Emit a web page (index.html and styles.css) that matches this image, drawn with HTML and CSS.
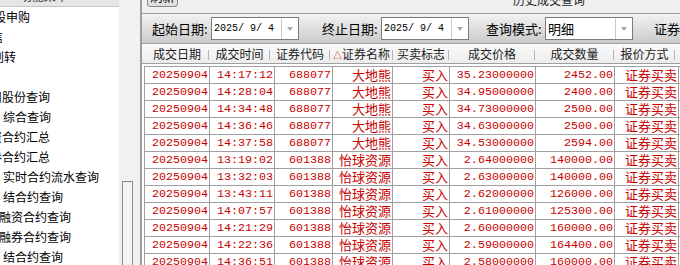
FILE: index.html
```html
<!DOCTYPE html>
<html lang="zh-CN">
<head>
  <meta charset="UTF-8">
  <title>历史成交查询</title>
  <link rel="stylesheet" href="styles.css">
</head>
<body>
  <div class="tree">
    <div class="tree-head"><span>功能菜单</span></div>
    <div class="tree-item" style="text-indent: -18px">新股申购</div>
    <div class="tree-item" style="text-indent: -9px">信</div>
    <div class="tree-item" style="text-indent: -8px">划转</div>
    <div class="tree-item"></div>
    <div class="tree-item" style="text-indent: -10px">用股份查询</div>
    <div class="tree-item" style="text-indent: 3px">综合查询</div>
    <div class="tree-item" style="text-indent: -10px">资合约汇总</div>
    <div class="tree-item" style="text-indent: -10px">券合约汇总</div>
    <div class="tree-item" style="text-indent: 3px">实时合约流水查询</div>
    <div class="tree-item" style="text-indent: 3px">结合约查询</div>
    <div class="tree-item" style="text-indent: -1px">融资合约查询</div>
    <div class="tree-item" style="text-indent: -1px">融券合约查询</div>
    <div class="tree-item" style="text-indent: 3px">结合约查询</div>
  </div>

  <div class="scroll">
    <div class="scroll-thumb"></div>
  </div>

  <div class="main">
    <div class="topbar">
      <button class="btn">刷新</button>
      <div class="title">历史成交查询</div>
    </div>

    <div class="toolbar">
      <span class="label">起始日期:</span>
      <div class="field"><span class="field-text mono">2025/ 9/ 4</span><span class="field-arrow"></span></div>
      <span class="label gap-a">终止日期:</span>
      <div class="field"><span class="field-text mono">2025/ 9/ 4</span><span class="field-arrow"></span></div>
      <span class="label gap-b">查询模式:</span>
      <div class="field"><span class="field-text">明细</span><span class="field-arrow"></span></div>
      <span class="label gap-c">证券代码:</span>
    </div>

    <div class="head">
      <span>成交日期</span>
      <span>成交时间</span>
      <span>证券代码</span>
      <span><i class="sort">△</i>证券名称</span>
      <span>买卖标志</span>
      <span>成交价格</span>
      <span>成交数量</span>
      <span>报价方式</span>
      <span class="blank"></span>
    </div>

    <div class="grid">
      <div class="row"><span>20250904</span><span>14:17:12</span><span>688077</span><span class="cn">大地熊</span><span class="cn">买入</span><span>35.23000000</span><span>2452.00</span><span class="cn">证券买卖</span><span></span></div>
      <div class="row"><span>20250904</span><span>14:28:04</span><span>688077</span><span class="cn">大地熊</span><span class="cn">买入</span><span>34.95000000</span><span>2400.00</span><span class="cn">证券买卖</span><span></span></div>
      <div class="row"><span>20250904</span><span>14:34:48</span><span>688077</span><span class="cn">大地熊</span><span class="cn">买入</span><span>34.73000000</span><span>2500.00</span><span class="cn">证券买卖</span><span></span></div>
      <div class="row"><span>20250904</span><span>14:36:46</span><span>688077</span><span class="cn">大地熊</span><span class="cn">买入</span><span>34.63000000</span><span>2500.00</span><span class="cn">证券买卖</span><span></span></div>
      <div class="row"><span>20250904</span><span>14:37:58</span><span>688077</span><span class="cn">大地熊</span><span class="cn">买入</span><span>34.53000000</span><span>2594.00</span><span class="cn">证券买卖</span><span></span></div>
      <div class="row"><span>20250904</span><span>13:19:02</span><span>601388</span><span class="cn">怡球资源</span><span class="cn">买入</span><span>2.64000000</span><span>140000.00</span><span class="cn">证券买卖</span><span></span></div>
      <div class="row"><span>20250904</span><span>13:32:03</span><span>601388</span><span class="cn">怡球资源</span><span class="cn">买入</span><span>2.63000000</span><span>140000.00</span><span class="cn">证券买卖</span><span></span></div>
      <div class="row"><span>20250904</span><span>13:43:11</span><span>601388</span><span class="cn">怡球资源</span><span class="cn">买入</span><span>2.62000000</span><span>126000.00</span><span class="cn">证券买卖</span><span></span></div>
      <div class="row"><span>20250904</span><span>14:07:57</span><span>601388</span><span class="cn">怡球资源</span><span class="cn">买入</span><span>2.61000000</span><span>125300.00</span><span class="cn">证券买卖</span><span></span></div>
      <div class="row"><span>20250904</span><span>14:21:29</span><span>601388</span><span class="cn">怡球资源</span><span class="cn">买入</span><span>2.60000000</span><span>160000.00</span><span class="cn">证券买卖</span><span></span></div>
      <div class="row"><span>20250904</span><span>14:22:36</span><span>601388</span><span class="cn">怡球资源</span><span class="cn">买入</span><span>2.59000000</span><span>164400.00</span><span class="cn">证券买卖</span><span></span></div>
      <div class="row"><span>20250904</span><span>14:36:51</span><span>601388</span><span class="cn">怡球资源</span><span class="cn">买入</span><span>2.58000000</span><span>160000.00</span><span class="cn">证券买卖</span><span></span></div>
    </div>
  </div>
</body>
</html>
```

FILE: styles.css
```css
* {
  box-sizing: border-box;
}

body {
  margin: 0;
  width: 680px;
  height: 265px;
  overflow: hidden;
  display: flex;
  font-family: "Noto Sans CJK SC", sans-serif;
  font-size: 12px;
  color: #000;
  background: #f0f0f0;
}

.mono {
  font-family: "Liberation Mono", monospace;
}

/* left menu tree */
.tree {
  width: 119px;
  flex: none;
  background: #fff;
  overflow: hidden;
}

.tree-head {
  height: 7px;
  background: #e6e6e6;
  border-bottom: 1px solid #c4c4c4;
  overflow: hidden;
}

.tree-head span {
  display: block;
  margin: -10px 0 0 20px;
  line-height: 12px;
  color: #333;
}

.tree-item {
  height: 20px;
  line-height: 20px;
  white-space: nowrap;
}

.scroll {
  width: 21px;
  flex: none;
  background: #f1f1f1;
  padding: 181px 0 0 3px;
}

.scroll-thumb {
  width: 11px;
  height: 100px;
  border: 1px solid #8c8c8c;
  background: #f3f3f3;
}

/* right query panel */
.main {
  width: 816px;
  flex: none;
  border-left: 2px solid #9c9c9c;
  background: #fff;
}

.topbar {
  height: 14px;
  background: #f0f0f0;
  border-bottom: 1px solid #a0a0a0;
  display: flex;
  align-items: flex-start;
}

.btn {
  width: 31px;
  height: 20px;
  margin: -13px 0 0 5px;
  padding: 0;
  border: 1px solid #8a8a8a;
  border-radius: 3px;
  background: linear-gradient(#f6f6f6, #dcdcdc);
  font-family: inherit;
  font-size: 12px;
  line-height: 18px;
  color: #000;
}

.title {
  margin: -6px 0 0 335px;
  line-height: 12px;
  color: #222;
}

.toolbar {
  height: 30px;
  background: linear-gradient(#f2f2f2, #cbcbcb);
  border-bottom: 1px solid #a0a0a0;
  display: flex;
  align-items: center;
  padding-left: 10px;
  font-size: 13px;
  white-space: nowrap;
}

.label {
  width: 55px;
  flex: none;
}

.gap-a { margin-left: 23px; }
.gap-b { margin-left: 17px; }
.gap-c { margin-left: 21px; }

.field {
  width: 88px;
  height: 23px;
  flex: none;
  margin-left: 4px;
  display: flex;
  background: #fff;
  border: 1px solid #7b7b7b;
}

.field-text {
  flex: 1;
  padding-left: 2px;
  line-height: 21px;
}

.field-text.mono {
  font-size: 10px;
  white-space: pre;
}

.field-arrow {
  width: 17px;
  border-left: 1px solid #c8c8c8;
  display: flex;
  align-items: center;
  justify-content: center;
}

.field-arrow::before {
  content: "";
  border-left: 3.5px solid transparent;
  border-right: 3.5px solid transparent;
  border-top: 4px solid #a8a8a8;
}

/* table header */
.head {
  height: 20px;
  padding-left: 3px;
  display: grid;
  grid-template-columns: 64px 61px 60px 63px 56px 86px 79px 61px 1fr;
  background: linear-gradient(#fbfbfb, #ececec);
  border-bottom: 1px solid #a0a0a0;
  color: #1a1a1a;
}

.head span {
  line-height: 20px;
  text-align: center;
  white-space: nowrap;
  background: linear-gradient(#b4b4b4, #b4b4b4) right center / 1px 10px no-repeat;
}

.head span.blank {
  background: none;
}

.sort {
  font-style: normal;
  color: #e00000;
  font-size: 9px;
}

/* data grid */
.grid {
  margin: 2px 0 0 2px;
  border-left: 1px solid #a0a0a0;
  border-top: 1px solid #a0a0a0;
}

.row {
  display: grid;
  grid-template-columns: 65px 65px 58px 60px 57px 86px 79px 64px 200px;
}

.row span {
  height: 17px;
  line-height: 16px;
  padding-right: 1px;
  text-align: right;
  border-right: 1px solid #a0a0a0;
  border-bottom: 1px solid #a0a0a0;
  color: #c80000;
  font-family: "Liberation Mono", monospace;
  font-size: 11.7px;
  white-space: nowrap;
}

.row span.cn {
  font-family: "Noto Sans CJK SC", sans-serif;
  font-size: 13px;
}
```
